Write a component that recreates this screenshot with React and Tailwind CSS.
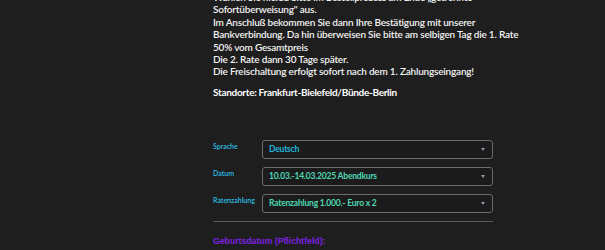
import React from "react";

const font = { fontFamily: "Lato, 'Open Sans', sans-serif" };

const Field = ({ label, value, tone }) => (
  <div className="flex items-start">
    <label className="w-[49px] pt-[2px] text-[7px] leading-[9px] font-semibold text-[#2bbfe3] whitespace-nowrap">
      {label}
    </label>
    <div className="flex-1 h-[19px] rounded-[3px] border border-[#6b6b6b] bg-[#1b1b1b] flex items-center justify-between pl-[6px] pr-[7px]">
      <span className={`text-[8.5px] font-bold tracking-[-0.2px] whitespace-nowrap ${tone}`}>{value}</span>
      <span className="w-0 h-0 border-l-[2.5px] border-r-[2.5px] border-t-[3px] border-l-transparent border-r-transparent border-t-[#8797a8]"></span>
    </div>
  </div>
);

export default function App() {
  return (
    <div className="w-[605px] h-[250px] overflow-hidden bg-[#1e1e1e] text-white" style={font}>
      <div className="ml-[213px] w-[280px] -mt-[9px]">
        <p className="text-[10px] leading-[12.4px] font-semibold tracking-[-0.2px] text-[#f2f2f2] whitespace-nowrap">
          Wählen Sie hierzu bitte im Bestellprozess am Ende „getrennte
          <br />
          Sofortüberweisung" aus.
          <br />
          Im Anschluß bekommen Sie dann Ihre Bestätigung mit unserer
          <br />
          Bankverbindung. Da hin überweisen Sie bitte am selbigen Tag die 1. Rate
          <br />
          50% vom Gesamtpreis
          <br />
          Die 2. Rate dann 30 Tage später.
          <br />
          Die Freischaltung erfolgt sofort nach dem 1. Zahlungseingang!
        </p>
        <p className="mt-[8px] text-[10px] leading-[12.4px] font-bold tracking-[-0.3px] text-white whitespace-nowrap">
          Standorte: Frankfurt-Bielefeld/Bünde-Berlin
        </p>

        <div className="mt-[42px] flex flex-col gap-[8px]">
          <Field label="Sprache" value="Deutsch" tone="text-[#22b6dd]" />
          <Field label="Datum" value="10.03.-14.03.2025 Abendkurs" tone="text-[#4fd8b4]" />
          <Field label="Ratenzahlung" value="Ratenzahlung 1.000.- Euro x 2" tone="text-[#4fd8b4]" />
        </div>

        <div className="mt-[8px] h-px bg-[#5a5a5a]"></div>

        <p
          className="mt-[14px] text-[8.7px] leading-[10px] font-bold text-[#7d22e0] whitespace-nowrap"
          style={{ fontFamily: "'Liberation Sans', Arial, sans-serif" }}
        >
          Geburtsdatum (Pflichtfeld):
        </p>
      </div>
    </div>
  );
}
